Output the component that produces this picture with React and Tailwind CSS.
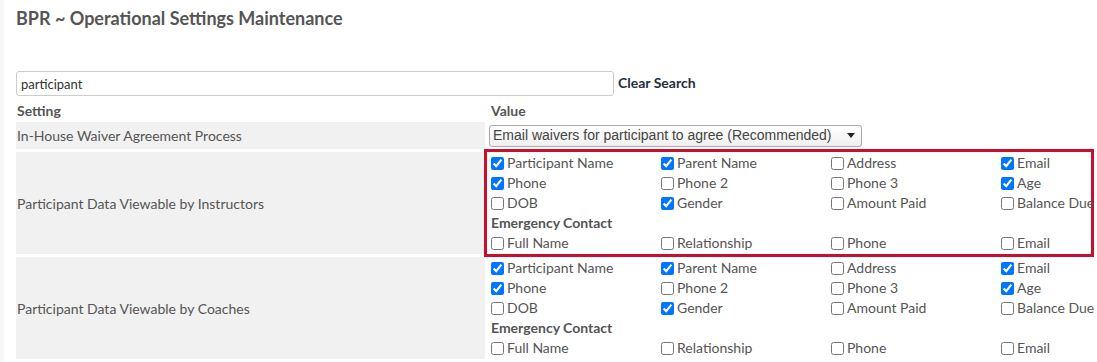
const fields = [
  ['Participant Name', true], ['Parent Name', true], ['Address', false], ['Email', true],
  ['Phone', true], ['Phone 2', false], ['Phone 3', false], ['Age', true],
  ['DOB', false], ['Gender', true], ['Amount Paid', false], ['Balance Due', false],
]

const emergency = [
  ['Full Name', false], ['Relationship', false], ['Phone', false], ['Email', false],
]

function CheckGrid({ items }) {
  return (
    <div className="flex flex-wrap w-[680px]">
      {items.map(([label, checked], i) => (
        <label key={i} className="flex w-[170px] shrink-0 items-center h-5 whitespace-nowrap">
          <input
            type="checkbox"
            defaultChecked={checked}
            className="w-[13px] h-[13px] mt-[3px] mb-[3px] mr-[3px] ml-1 accent-[#0075ff]"
          />
          <span className="relative -top-px">{label}</span>
        </label>
      ))}
    </div>
  )
}

function DataPicker() {
  return (
    <div className="pt-px pb-px">
      <CheckGrid items={fields} />
      <div className="h-5 leading-5 pl-1 font-bold text-[#555]">Emergency Contact</div>
      <CheckGrid items={emergency} />
    </div>
  )
}

export default function App() {
  return (
    <div className="min-h-[362px] bg-white border-l-4 border-[#f7f7f7] font-['Lato','Noto_Sans',sans-serif] text-[14px] text-[#555]">
      <div className="pl-3 pt-[6px] overflow-hidden">
        <h1 className="text-[18px] leading-6 font-bold text-[#555]">BPR ~ Operational Settings Maintenance</h1>

        <div className="flex items-center gap-1 mt-[41px]">
          <input
            defaultValue="participant"
            className="w-[598px] h-[25px] border border-[#ccc] rounded-[3px] px-1 text-[13px] text-[#333] outline-none"
          />
          <span className="relative -top-px text-[14px] font-bold text-[#1f2f3e]">Clear Search</span>
        </div>

        <div className="grid grid-cols-[469px_604px] gap-x-[2px] gap-y-[3px] mt-[4px]">
          <div className="h-[19px] leading-[21px] font-bold pl-px">Setting</div>
          <div className="h-[19px] leading-[21px] font-bold pl-1">Value</div>

          <div className="bg-[#f1f1f1] h-[27px] flex items-center pl-px">In-House Waiver Agreement Process</div>
          <div className="h-[27px] flex items-center pl-[2px]">
            <div className="w-[373px] h-[22px] flex items-center justify-between border border-[#aaa] rounded-[3px] bg-gradient-to-b from-white to-[#efefef] pl-[3px] pr-[6px] font-['Liberation_Sans',Arial,sans-serif] text-[14px] text-[#444]">
              <span>Email waivers for participant to agree (Recommended)</span>
              <svg width="8" height="5" viewBox="0 0 8 5"><path d="M0 0h8L4 5z" fill="#222" /></svg>
            </div>
          </div>

          <div className="bg-[#f1f1f1] flex items-center pl-px">Participant Data Viewable by Instructors</div>
          <div className="outline-[3px] outline-solid outline-[#c8102e]">
            <DataPicker />
          </div>

          <div className="bg-[#f1f1f1] flex items-center pl-px">Participant Data Viewable by Coaches</div>
          <div>
            <DataPicker />
          </div>
        </div>
      </div>
    </div>
  )
}
